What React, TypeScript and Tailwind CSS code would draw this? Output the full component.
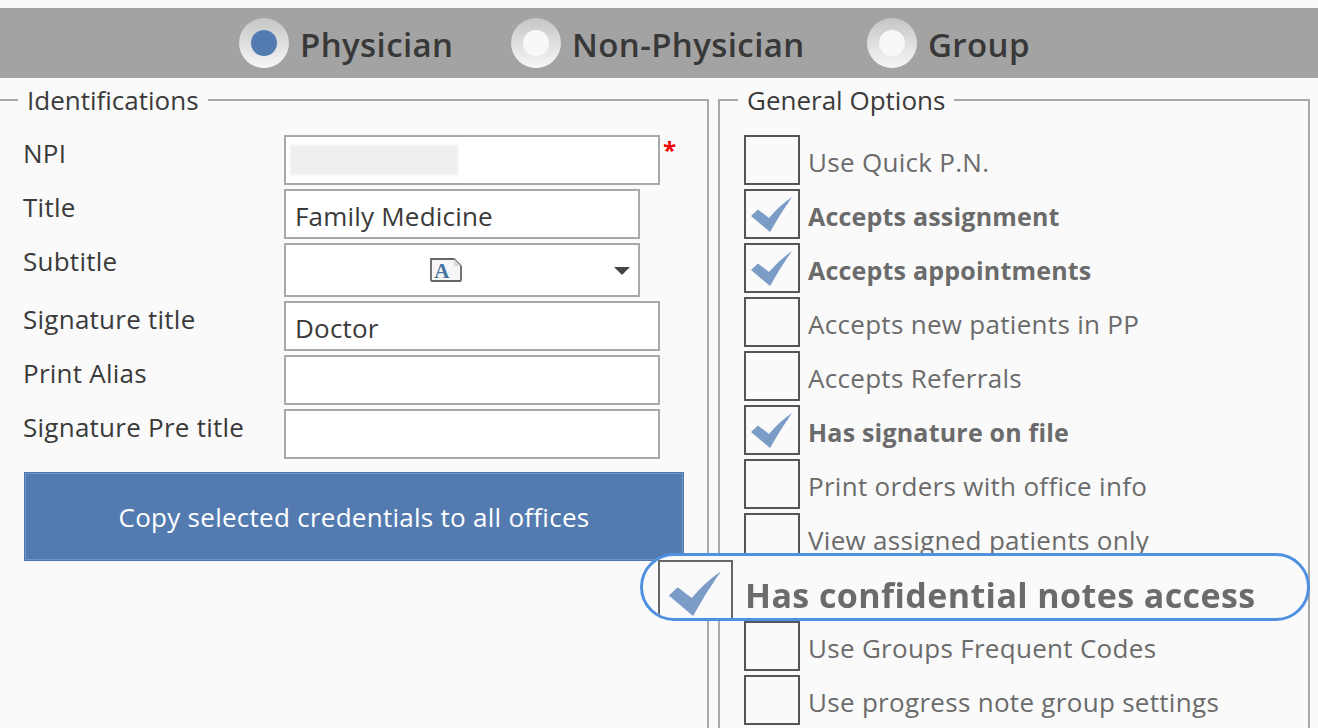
const font = "font-['Open_Sans','Noto_Sans',sans-serif]";

const radios = [
  { label: "Physician", checked: true, className: "w-[272px]" },
  { label: "Non-Physician", checked: false, className: "w-[356px]" },
  { label: "Group", checked: false, className: "w-[161px]" },
];

const idRows = [
  { label: "NPI", width: "w-[376px]", height: "h-[50px]", text: "" },
  { label: "Title", width: "w-[356px]", height: "h-[50px]", text: "Family Medicine" },
  { label: "Subtitle", width: "w-[356px]", height: "h-[54px]", text: "" },
  { label: "Signature title", width: "w-[376px]", height: "h-[50px]", text: "Doctor" },
  { label: "Print Alias", width: "w-[376px]", height: "h-[50px]", text: "" },
  { label: "Signature Pre title", width: "w-[376px]", height: "h-[50px]", text: "" },
];

const options = [
  { label: "Use Quick P.N.", checked: false },
  { label: "Accepts assignment", checked: true },
  { label: "Accepts appointments", checked: true },
  { label: "Accepts new patients in PP", checked: false },
  { label: "Accepts Referrals", checked: false },
  { label: "Has signature on file", checked: true },
  { label: "Print orders with office info", checked: false },
  { label: "View assigned patients only", checked: false },
  { label: "", checked: false },
  { label: "Use Groups Frequent Codes", checked: false },
  { label: "Use progress note group settings", checked: false },
];

function Check({ className }: { className: string }) {
  return (
    <svg viewBox="0 0 56 50" preserveAspectRatio="none" className={className}>
      <path d="M7 27 L14 20.5 L25 29 Q35 17 48 8 Q36 25 26 43 Z" fill="#7a9cc6" />
    </svg>
  );
}

function FontIcon() {
  return (
    <svg viewBox="0 0 32 24" className="h-[24px] w-[32px]">
      <path d="M1 1 H24 L31 8 V22 Q31 23 30 23 H2 Q1 23 1 22 Z" fill="#f6f6f6" stroke="#666666" strokeWidth="1.8" />
      <path d="M24 1 V8 H31 Z" fill="#d8d8d8" />
      <text x="12" y="20" textAnchor="middle" fontFamily="Liberation Serif" fontWeight="700" fontSize="21" fill="#44739f">A</text>
    </svg>
  );
}

export default function App() {
  return (
    <div className={`relative h-[728px] w-[1318px] overflow-hidden bg-[#fafafa] pt-[8px] ${font}`}>
      {/* type selector */}
      <div className="flex h-[70px] items-center bg-[#a3a3a3] pl-[239px]">
        {radios.map((r) => (
          <div key={r.label} className={`flex items-center gap-[11px] ${r.className}`}>
            <div className="flex h-[50px] w-[50px] shrink-0 items-center justify-center rounded-full bg-gradient-to-b from-[#c6c6c6] to-[#f7f7f7]">
              <div className={`h-[26px] w-[26px] rounded-full ${r.checked ? "bg-[#537bb0]" : "bg-[#f8f8f8]"}`} />
            </div>
            <span className="mt-[3px] whitespace-nowrap text-[33px] font-semibold leading-none tracking-[0.4px] text-[#383838]">{r.label}</span>
          </div>
        ))}
      </div>

      <div className="flex gap-[9px]">
        {/* Identifications */}
        <fieldset className="h-[700px] w-[709px] border-2 border-l-0 border-[#a9a9a9] p-0">
          <legend className="ml-[18px] px-[9px] text-[26px] leading-[44px] text-[#3a3a3a]">Identifications</legend>
          <div className="flex flex-col gap-[4px] pt-[13px]">
            {idRows.map((row) => (
              <div key={row.label} className="flex">
                <div className="w-[284px] shrink-0 pl-[23px] text-[26px] leading-[36px] tracking-[0.25px] text-[#3a3a3a]">{row.label}</div>
                <div className={`relative flex items-center border-2 border-[#a9a9a9] bg-white pl-[9px] pt-[5px] text-[26px] tracking-[0.2px] text-[#3a3a3a] ${row.width} ${row.height}`}>
                  {row.text}
                  {row.label === "NPI" && <div className="ml-[-5px] mt-[-5px] h-[30px] w-[168px] bg-[#eeeeee] blur-[1px]" />}
                  {row.label === "Subtitle" && (
                    <>
                      <div className="absolute left-[144px] top-[13px]"><FontIcon /></div>
                      <div className="absolute right-[8px] top-[22px] h-0 w-0 border-x-[8px] border-t-[8px] border-x-transparent border-t-[#444444]" />
                    </>
                  )}
                </div>
                {row.label === "NPI" && <span className="ml-[3px] text-[24px] font-bold leading-[30px] text-[#f00000]">*</span>}
              </div>
            ))}
            <button className="ml-[24px] mt-[9px] flex h-[89px] w-[660px] items-center justify-center border border-[#4f78b0] bg-[#537bb0] pt-[2px] text-[26px] tracking-[0.27px] text-white shadow-[inset_0_0_0_1px_#6f96c8]">
              Copy selected credentials to all offices
            </button>
          </div>
        </fieldset>

        {/* General Options */}
        <fieldset className="h-[700px] w-[592px] border-2 border-[#a9a9a9] p-0">
          <legend className="ml-[18px] px-[9px] text-[26px] leading-[44px] text-[#3a3a3a]">General Options</legend>
          <div className="flex flex-col gap-[4px] pl-[24px] pt-[13px]">
            {options.map((opt, i) => (
              <div key={i} className="flex items-center gap-[8px]">
                <div className="h-[50px] w-[56px] shrink-0 border-2 border-[#555555]">
                  {opt.checked && <Check className="ml-[-2px] mt-[-2px] h-[50px] w-[56px]" />}
                </div>
                <span className={`mt-[5px] whitespace-nowrap text-[#6b6b6b] ${opt.checked ? "text-[25px] font-bold tracking-[0.2px]" : "text-[26px] tracking-[0.3px]"}`}>{opt.label}</span>
              </div>
            ))}
          </div>
        </fieldset>
      </div>

      {/* zoomed callout over the option row */}
      <div className="absolute left-[640px] top-[553px] flex h-[68px] w-[670px] overflow-hidden rounded-full border-[3px] border-[#4f90e0] bg-[#fafafa]">
        <div className="ml-[15px] mt-[4px] h-[72px] w-[75px] shrink-0 border-2 border-[#666666] blur-[0.4px]">
          <Check className="mt-[-1px] h-[64px] w-[71px]" />
        </div>
        <span className="ml-[12px] mt-[15px] whitespace-nowrap text-[34px] font-bold leading-[48px] tracking-[0.4px] text-[#6b6b6b] blur-[0.7px]">Has confidential notes access</span>
      </div>
    </div>
  );
}
